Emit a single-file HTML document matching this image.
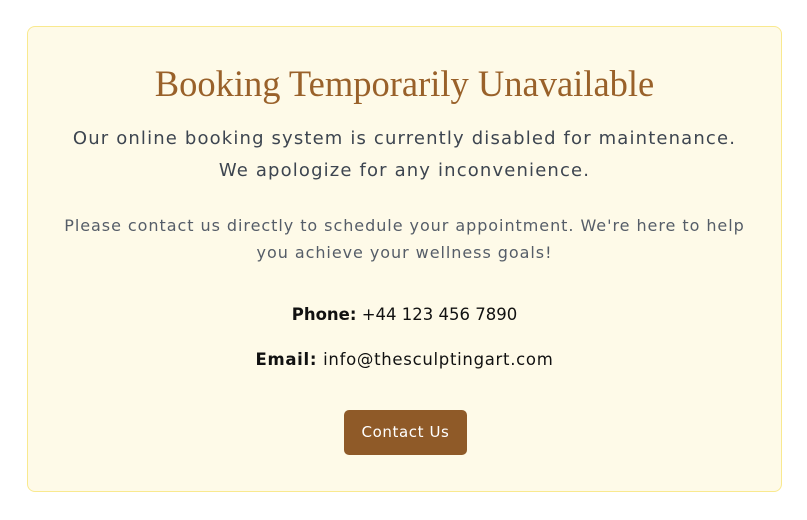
<!DOCTYPE html>
<html><head><meta charset="utf-8"><style>
html,body{margin:0;padding:0;background:#fff;width:807px;height:520px;overflow:hidden}
.box{position:absolute;left:27px;top:26px;width:753px;height:464px;background:#fefae8;border:1px solid #f9e98f;border-radius:8px;text-align:center;font-family:"DejaVu Sans","Liberation Sans",sans-serif}
h1{position:absolute;left:0;right:0;top:35px;margin:0;font-family:"Liberation Serif",serif;font-weight:normal;font-size:36.5px;color:#99612a}
.p1{position:absolute;left:0;right:0;top:96px;font-size:18px;line-height:32px;color:#3d4550;letter-spacing:1.15px}
.p2{position:absolute;left:0;right:0;top:185px;font-size:16px;line-height:27px;color:#555d68;letter-spacing:0.95px}
.c{position:absolute;left:0;right:0;font-size:16.5px;color:#111}
.btn{position:absolute;left:316px;top:383px;width:123px;height:45px;background:#8f5a28;border-radius:5px;color:#fff;font-size:15px;line-height:45px;letter-spacing:0.6px}
</style></head><body>
<div class="box">
<h1>Booking Temporarily Unavailable</h1>
<div class="p1">Our online booking system is currently disabled for maintenance.<br>We apologize for any inconvenience.</div>
<div class="p2">Please contact us directly to schedule your appointment. We're here to help<br>you achieve your wellness goals!</div>
<div class="c" style="top:278px"><b>Phone:</b> +44 123 456 7890</div>
<div class="c" style="top:323px;letter-spacing:0.7px"><b>Email:</b> info@thesculptingart.com</div>
<div class="btn">Contact Us</div>
</div>
</body></html>
